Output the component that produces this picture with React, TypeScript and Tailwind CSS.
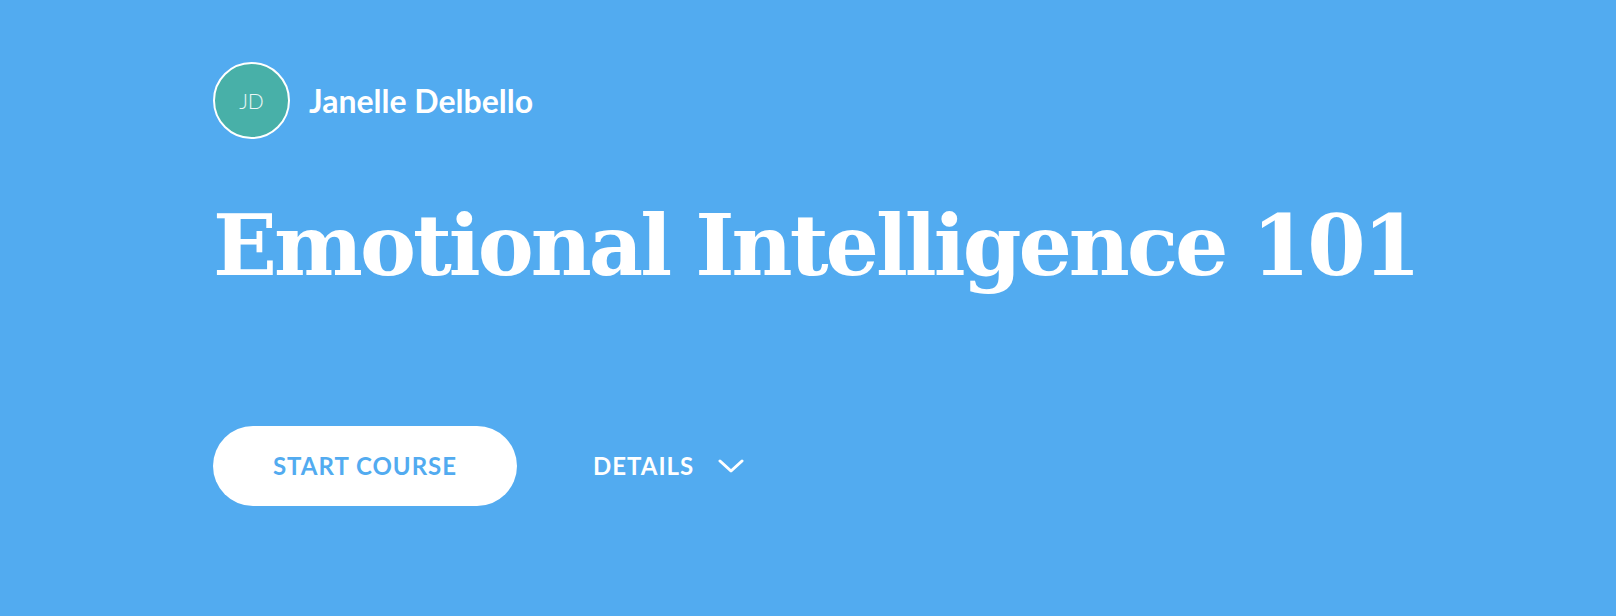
export default function App() {
    return (
        <div className="w-[1616px] h-[616px] bg-[#52abf0] pl-[213px] pt-[62px] font-['Lato',sans-serif] text-white">
            {/* Author */}
            <div className="flex items-center gap-[19px]">
                <div className="h-[77px] w-[77px] rounded-full border-2 border-white bg-[#48b0a8] flex items-center justify-center">
                    <span className="text-[21px] font-light text-white/90">JD</span>
                </div>
                <span className="text-[32px] font-bold">Janelle Delbello</span>
            </div>

            {/* Title */}
            <h1 className="mt-[57px] font-['DejaVu_Serif',serif] text-[84px] font-bold leading-[1.2] tracking-[-3px]">
                Emotional Intelligence 101
            </h1>

            {/* Actions */}
            <div className="mt-[129px] flex items-center gap-[76px]">
                <button className="h-[80px] w-[304px] rounded-full bg-white text-[24px] font-bold tracking-[1px] text-[#52abf0]">
                    START COURSE
                </button>
                <button className="flex items-center gap-[24px] text-[24px] font-bold tracking-[1px]">
                    DETAILS
                    <svg width="26" height="16" viewBox="0 0 26 16" fill="none" stroke="currentColor" strokeWidth="3" strokeLinecap="round" strokeLinejoin="round">
                        <polyline points="2,3 13,13 24,3" />
                    </svg>
                </button>
            </div>
        </div>
    )
}
